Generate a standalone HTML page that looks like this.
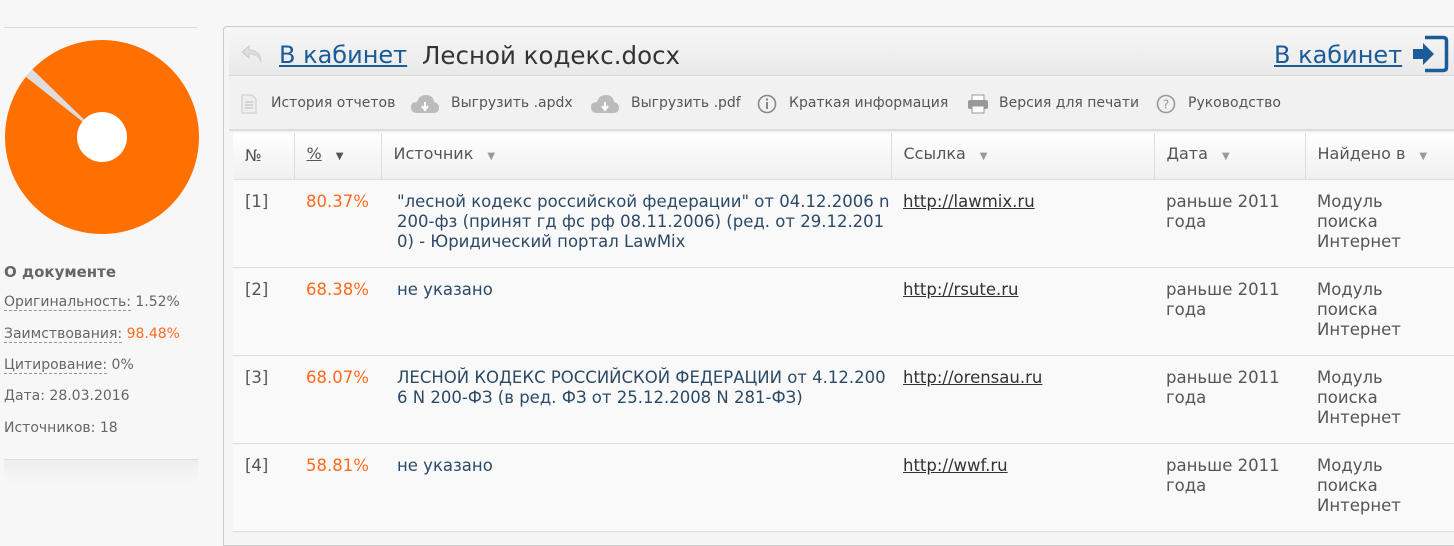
<!DOCTYPE html>
<html><head><meta charset="utf-8"><style>
*{box-sizing:border-box;margin:0;padding:0}
body{width:1454px;height:533px;overflow:hidden;background:#f7f7f7;font-family:"DejaVu Sans","Liberation Sans",sans-serif;color:#555;position:relative}
.abs{position:absolute}
.side{font-size:14px;color:#666}
.dash{border-bottom:1px dashed #999}
.panel{left:223px;top:26px;width:1240px;height:520px;border:1px solid #ccc;border-radius:4px 0 0 0;background:#f5f5f5}
.hdr{left:229px;top:30px;width:1225px;height:46px;background:linear-gradient(#f6f6f6,#e9e9e9);border-bottom:1px solid #d8d8d8}
.tb{left:229px;top:77px;width:1225px;height:54px;background:#f1f1f1;border-bottom:2px solid #ddd;font-size:14px;color:#555}
.tb span{position:absolute;top:18px}
table{position:absolute;left:233px;top:133px;width:1221px;table-layout:fixed;border-collapse:collapse;font-size:16.5px;line-height:20px;background:#f9f9f9}
th{height:46px;text-align:left;font-weight:normal;color:#555;font-size:16px;padding:0 12px;border-right:1px solid #ddd;border-bottom:1px solid #ddd;background:linear-gradient(#fff,#f0f0f0)}
td{height:88px;vertical-align:top;padding:12px 12px;border-bottom:1px solid #ddd}
.ar{color:#999;font-size:10px;margin-left:14px}
.p{color:#ff6a1f}
.s{color:#2c4a66}
.l{color:#333;text-decoration:underline}
a{color:#1a5b9a;text-decoration:underline}
</style></head><body>
<div class="abs" style="left:4px;top:27px;width:194px;border-top:1px solid #ddd"></div>
<svg class="abs" style="left:4px;top:39px" width="196" height="196" viewBox="-98 -98 196 196">
<circle r="97" fill="#ff7000"/>
<path d="M0 0 L-76 -60 L-70 -68 Z" fill="#ddd"/>
<circle r="25" fill="#fff"/>
</svg>
<div class="abs side" style="left:4px;top:263px;font-weight:bold;font-size:15px">О документе</div>
<div class="abs side" style="left:4px;top:294px"><span class="dash">Оригинальность:</span> 1.52%</div>
<div class="abs side" style="left:4px;top:326px"><span class="dash">Заимствования:</span> <span class="p">98.48%</span></div>
<div class="abs side" style="left:4px;top:357px"><span class="dash">Цитирование:</span> 0%</div>
<div class="abs side" style="left:4px;top:388px">Дата: 28.03.2016</div>
<div class="abs side" style="left:4px;top:420px">Источников: 18</div>
<div class="abs" style="left:4px;top:459px;width:194px;height:25px;border-top:1px solid #ddd;background:linear-gradient(#eee,#f7f7f7)"></div>
<div class="abs panel"></div>
<div class="abs hdr">
<svg class="abs" style="left:11px;top:13px" width="24" height="22" viewBox="0 0 24 22"><path d="M9 3 L2 9 L9 15 V11 C15 11 19 13 21 19 C21 11 16 7 9 7 Z" fill="#ddd" stroke="#ccc"/></svg>
<span class="abs" style="left:50px;top:11px;font-size:24px"><a>В кабинет</a></span>
<span class="abs" style="left:193px;top:11px;font-size:24.5px;color:#333">Лесной кодекс.docx</span>
<span class="abs" style="left:1045px;top:11px;font-size:24px"><a>В кабинет</a></span>
<svg class="abs" style="left:1182px;top:5px" width="38" height="38" viewBox="0 0 38 38"><path d="M14 2.5 H32 Q35.5 2.5 35.5 6 V32 Q35.5 35.5 32 35.5 H14" fill="none" stroke="#1a5b9a" stroke-width="3.5"/><path d="M2 14 H12 V8 L23 19 L12 30 V24 H2 Z" fill="#1a5b9a"/></svg>
</div>
<div class="abs tb">
<svg class="abs" style="left:12px;top:17px" width="16" height="20"><path d="M1 1 H11 L15 5 V19 H1 Z" fill="#eee" stroke="#ccc"/><path d="M4 8 H12 M4 11 H12 M4 14 H12" stroke="#bbb"/></svg>
<span style="left:42px">История отчетов</span>
<svg class="abs" style="left:181px;top:16px" width="30" height="22"><path d="M7 20 Q1 20 1 14 Q1 9 7 9 Q9 2 16 2 Q23 2 24 9 Q29 10 29 15 Q29 20 23 20 Z" fill="#bbb"/><path d="M15 9 V16 M12 13 L15 17 L18 13" stroke="#fff" stroke-width="2" fill="none"/></svg>
<span style="left:222px">Выгрузить .apdx</span>
<svg class="abs" style="left:361px;top:16px" width="30" height="22"><path d="M7 20 Q1 20 1 14 Q1 9 7 9 Q9 2 16 2 Q23 2 24 9 Q29 10 29 15 Q29 20 23 20 Z" fill="#bbb"/><path d="M15 9 V16 M12 13 L15 17 L18 13" stroke="#fff" stroke-width="2" fill="none"/></svg>
<span style="left:402px">Выгрузить .pdf</span>
<svg class="abs" style="left:528px;top:17px" width="20" height="20"><circle cx="10" cy="10" r="8.5" fill="none" stroke="#888" stroke-width="1.6"/><path d="M10 8 V15" stroke="#888" stroke-width="2"/><circle cx="10" cy="5.5" r="1.2" fill="#888"/></svg>
<span style="left:560px">Краткая информация</span>
<svg class="abs" style="left:738px;top:17px" width="22" height="20"><rect x="5" y="1" width="12" height="6" fill="#fff" stroke="#999"/><rect x="1" y="6" width="20" height="9" rx="2" fill="#999"/><rect x="5" y="12" width="12" height="7" fill="#fff" stroke="#999"/></svg>
<span style="left:770px">Версия для печати</span>
<svg class="abs" style="left:927px;top:17px" width="20" height="20"><circle cx="10" cy="10" r="8.5" fill="none" stroke="#999" stroke-width="1.6"/><text x="10" y="14.5" font-size="12" text-anchor="middle" fill="#999" font-family="DejaVu Sans">?</text></svg>
<span style="left:959px">Руководство</span>
</div>
<table>
<colgroup><col style="width:61px"><col style="width:87px"><col style="width:510px"><col style="width:263px"><col style="width:151px"><col style="width:149px"></colgroup>
<tr><th>№</th><th><span style="text-decoration:underline">%</span><span class="ar" style="color:#555">▼</span></th><th>Источник<span class="ar">▼</span></th><th>Ссылка<span class="ar">▼</span></th><th>Дата<span class="ar">▼</span></th><th style="border-right:0">Найдено в<span class="ar">▼</span></th></tr>
<tr><td>[1]</td><td class="p">80.37%</td><td class="s" style="padding-left:16px;padding-right:0;word-break:break-all">"лесной кодекс российской федерации" от 04.12.2006 n 200-фз (принят гд фс рф 08.11.2006) (ред. от 29.12.2010) - Юридический портал LawMix</td><td><span class="l">http://lawmix.ru</span></td><td>раньше 2011 года</td><td>Модуль<br>поиска<br>Интернет</td></tr>
<tr><td>[2]</td><td class="p">68.38%</td><td class="s" style="padding-left:16px">не указано</td><td><span class="l">http://rsute.ru</span></td><td>раньше 2011 года</td><td>Модуль<br>поиска<br>Интернет</td></tr>
<tr><td>[3]</td><td class="p">68.07%</td><td class="s" style="padding-left:16px;padding-right:0;word-break:break-all">ЛЕСНОЙ КОДЕКС РОССИЙСКОЙ ФЕДЕРАЦИИ от 4.12.2006 N 200-ФЗ (в ред. ФЗ от 25.12.2008 N 281-ФЗ)</td><td><span class="l">http://orensau.ru</span></td><td>раньше 2011 года</td><td>Модуль<br>поиска<br>Интернет</td></tr>
<tr><td>[4]</td><td class="p">58.81%</td><td class="s" style="padding-left:16px">не указано</td><td><span class="l">http://wwf.ru</span></td><td>раньше 2011 года</td><td>Модуль<br>поиска<br>Интернет</td></tr>
</table>
</body></html>
